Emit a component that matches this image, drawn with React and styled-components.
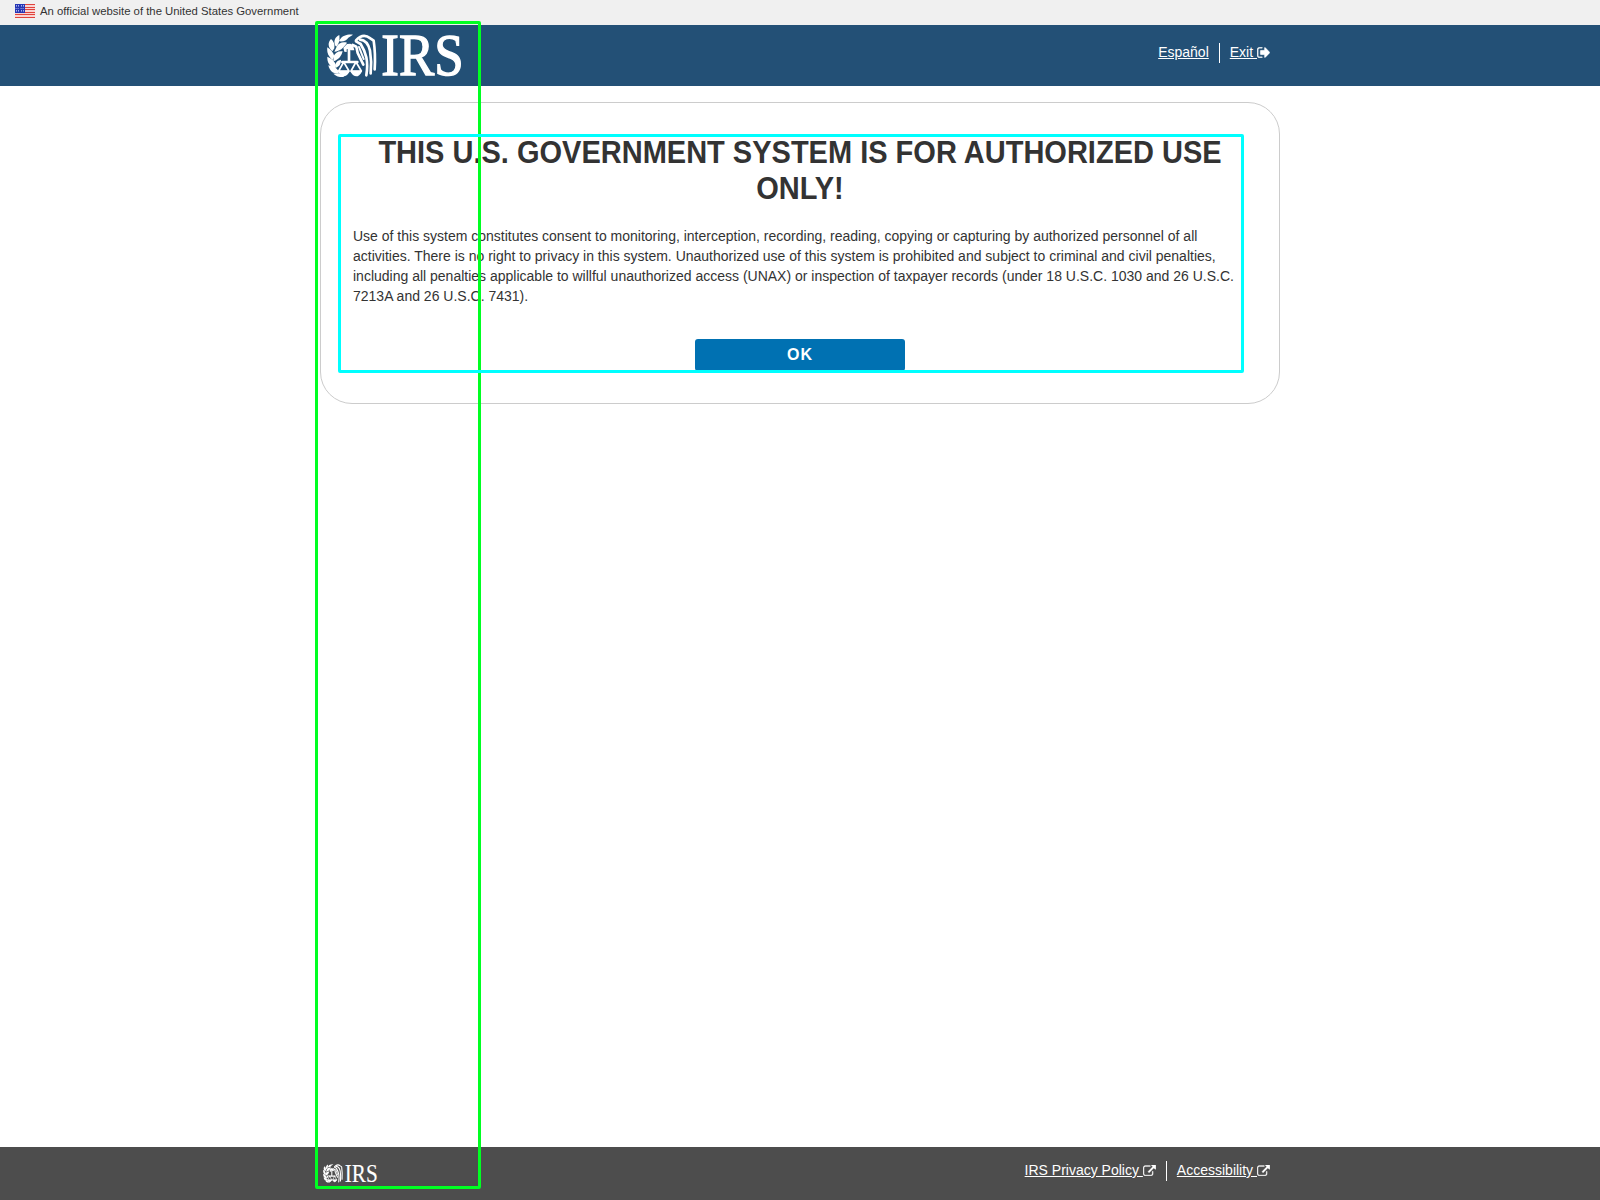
import React from 'react';
import styled, { createGlobalStyle } from 'styled-components';

const GlobalStyle = createGlobalStyle`
  *, *::before, *::after { box-sizing: border-box; }
  body {
    margin: 0;
    background: #fff;
    color: #333;
    font: 14px/20px "Liberation Sans", Arial, sans-serif;
  }
`;

const Page = styled.div`
  position: relative;
  display: flex;
  flex-direction: column;
  height: 1200px;
  overflow: hidden;
`;

const GovBanner = styled.div`
  display: flex;
  align-items: center;
  gap: 5px;
  height: 25px;
  padding: 0 15px 3px;
  background: #f0f0f0;
  font-size: 11.34px;
  line-height: 16px;
`;

const Bar = styled.div`
  flex: none;
  height: ${(p) => p.$height}px;
  background: ${(p) => p.$color};
  color: #fff;
`;

const Container = styled.div`
  display: flex;
  justify-content: space-between;
  align-items: flex-start;
  width: 960px;
  margin: 0 auto;
  padding: ${(p) => p.$top}px 10px 0 ${(p) => p.$left}px;
`;

const LinkList = styled.nav`
  display: flex;
  height: 20px;
  margin-top: ${(p) => p.$top}px;
`;

const BarLink = styled.a`
  display: block;
  color: #fff;
  line-height: 19px;
  text-decoration: underline;
  white-space: pre;

  & + & {
    margin-left: 10px;
    padding-left: 10px;
    border-left: 1px solid #fff;
  }
`;

const Icon = styled.svg`
  display: inline-block;
  width: 13px;
  height: 11px;
  vertical-align: -1px;
  fill: #fff;
  stroke: #fff;
  stroke-width: 40px;
`;

const Main = styled.main`
  flex: 1;
  padding-top: 16px;
`;

const Card = styled.section`
  display: flex;
  flex-direction: column;
  align-items: center;
  width: 960px;
  height: 302px;
  margin: 0 auto;
  padding: 32px 32px 30px;
  border: 1px solid #ccc;
  border-radius: 32px;
`;

const Title = styled.h1`
  height: 72px;
  margin: 0;
  font-size: 29px;
  line-height: 33.6px;
  font-weight: 700;
  text-align: center;
  transform: scaleY(1.0714);
  transform-origin: top;
`;

const Notice = styled.p`
  width: 894px;
  height: 80px;
  margin: 19px 0 33px;
  line-height: 18.69px;
  transform: scaleY(1.07);
  transform-origin: top;
`;

const OkButton = styled.button`
  width: 210px;
  height: 32px;
  padding: 0;
  border: 0;
  border-radius: 3px;
  background: #0071b2;
  color: #fff;
  font: 700 16px/32px "Liberation Sans", Arial, sans-serif;
  letter-spacing: 1px;
`;

const Highlight = styled.div`
  position: absolute;
  left: ${(p) => p.$x}px;
  top: ${(p) => p.$y}px;
  width: ${(p) => p.$w}px;
  height: ${(p) => p.$h}px;
  border: 3px solid ${(p) => p.$color};
  border-radius: 2px;
  pointer-events: none;
`;

const LogoSvg = styled.svg`
  display: block;
  width: ${(p) => p.$w}px;
  height: ${(p) => p.$h}px;
  margin-top: ${(p) => p.$top}px;
  overflow: visible;
`;

const Flag = () => (
  <svg width="20" height="14" viewBox="0 0 20 14">
    <rect width="20" height="14" fill="#f9d4d2" />
    {[0, 3, 5, 8, 10, 13].map((y) => (
      <rect key={y} y={y} width="20" height="1" fill="#e0433c" />
    ))}
    <rect width="10" height="9" fill="#2636b5" />
    {[1, 3, 6, 8].map((x) => (
      <g key={x} fill="#a9b1e8">
        <rect x={x} y="1" width="1" height="1.6" />
        <rect x={x - 0.4} y="4" width="1" height="1" />
        <rect x={x} y="6" width="1" height="1.6" />
      </g>
    ))}
  </svg>
);

const Logo = ({ w, h, top = 0, weight }) => (
  <LogoSvg $w={w} $h={h} $top={top} viewBox="0 0 405 132" preserveAspectRatio="none" role="img" aria-label="IRS">
    <g fill="#fff">
      {/* laurel branch */}
      <path d="M78 2C62 0 46 5 40 15L35 22C50 24 59 19 64 11Z" />
      <path d="M37 3C25 9 19 19 24 34L28 38C38 27 38 15 37 3Z" />
      <path d="M12 15C1 26 3 40 16 52L22 43C24 30 20 22 12 15Z" />
      <path d="M60 26C46 22 34 28 29 38L22 53C39 52 51 40 60 26Z" />
      <path d="M1 40C-1 56 4 68 17 78L22 67C19 55 11 46 1 40Z" />
      <path d="M47 52C33 50 24 57 20 66L19 82C34 78 43 67 47 52Z" />
      <path d="M1 68C0 86 9 98 25 104L27 93C22 81 14 73 1 68Z" />
      <path d="M42 77C28 80 24 87 25 101C36 99 42 90 42 77Z" />
      <path d="M4 94C8 111 18 120 36 119L33 109C26 100 17 96 4 94Z" />
      <path d="M19 119C28 128 40 130 52 129C44 119 34 117 19 119Z" />
      {/* head */}
      <path d="M60 30L49 41L52 53L59 54L59 46L66 44L71 49H82L78 34L70 29Z" />
    </g>
    <g fill="none" stroke="#fff" strokeLinecap="round" strokeLinejoin="round">
      {/* shoulder and feathers */}
      <path d="M87 19Q108 -4 130 13L140 20Q146 60 143 106" strokeWidth="8" />
      <path d="M99 17Q122 19 129 50Q135 85 131 118" strokeWidth="8" />
      <path d="M87 22L101 30Q113 49 118 70Q123 95 118 124" strokeWidth="8" />
      <path d="M77 33L88 38L92 57L109 92" strokeWidth="8" />
      <path d="M96 39L110 75" strokeWidth="6" />
      {/* balance */}
      <path d="M66 44V82M46 84H91" strokeWidth="8" />
      <path d="M50 84L35 111H66L50 84M87 84L72 111H103L87 84" strokeWidth="5" />
      <path d="M35 112Q50 138 66 112ZM72 112Q88 138 103 112Z" strokeWidth="4" fill="#fff" />
    </g>
    <text
      x="163"
      y="123"
      fill="#fff"
      stroke="#fff"
      strokeWidth={weight}
      fontFamily="Liberation Serif, Times New Roman, serif"
      fontSize="177"
      textLength="247"
      lengthAdjust="spacingAndGlyphs"
    >
      IRS
    </text>
  </LogoSvg>
);

const SignOut = () => (
  <Icon viewBox="-20 236 1608 1320" preserveAspectRatio="none" aria-hidden="true">
    <path d="M640 1440q0 4 1 20t.5 26.5-3 23.5-10 19.5-20.5 6.5h-320q-119 0-203.5-84.5t-84.5-203.5v-704q0-119 84.5-203.5t203.5-84.5h320q13 0 22.5 9.5t9.5 22.5q0 4 1 20t.5 26.5-3 23.5-10 19.5-20.5 6.5h-320q-66 0-113 47t-47 113v704q0 66 47 113t113 47h312l11.5 1 11.5 3 8 5.5 7 9 2 13.5zm928-544q0 26-19 45l-544 544q-19 19-45 19t-45-19-19-45v-288h-448q-26 0-45-19t-19-45v-384q0-26 19-45t45-19h448v-288q0-26 19-45t45-19 45 19l544 544q19 19 19 45z" />
  </Icon>
);

const ExternalLink = () => (
  <Icon viewBox="-20 44 1832 1512" preserveAspectRatio="none" aria-hidden="true">
    <path d="M1408 928v320q0 119-84.5 203.5t-203.5 84.5h-832q-119 0-203.5-84.5t-84.5-203.5v-832q0-119 84.5-203.5t203.5-84.5h704q14 0 23 9t9 23v64q0 14-9 23t-23 9h-704q-66 0-113 47t-47 113v832q0 66 47 113t113 47h832q66 0 113-47t47-113v-320q0-14 9-23t23-9h64q14 0 23 9t9 23zm384-864v512q0 26-19 45t-45 19-45-19l-176-176-652 652q-10 10-23 10t-23-10l-114-114q-10-10-10-23t10-23l652-652-176-176q-19-19-19-45t19-45 45-19h512q26 0 45 19t19 45z" />
  </Icon>
);

export default function App() {
  return (
    <Page>
      <GlobalStyle />
      <GovBanner>
        <Flag />
        <span>An official website of the United States Government</span>
      </GovBanner>
      <Bar as="header" $height={61} $color="#235076">
        <Container $top={9} $left={7}>
          <Logo w={135} h={44} weight={4} />
          <LinkList $top={9}>
            <BarLink>Español</BarLink>
            <BarLink>Exit <SignOut /></BarLink>
          </LinkList>
        </Container>
      </Bar>
      <Main>
        <Card>
          <Title>THIS U.S. GOVERNMENT SYSTEM IS FOR AUTHORIZED USE ONLY!</Title>
          <Notice>
            Use of this system constitutes consent to monitoring, interception, recording, reading, copying or capturing by authorized personnel of all activities. There is no right to privacy in this system. Unauthorized use of this system is prohibited and subject to criminal and civil penalties, including all penalties applicable to willful unauthorized access (UNAX) or inspection of taxpayer records (under 18 U.S.C. 1030 and 26 U.S.C. 7213A and 26 U.S.C. 7431).
          </Notice>
          <OkButton>OK</OkButton>
        </Card>
      </Main>
      <Bar as="footer" $height={53} $color="#4d4d4d">
        <Container $top={14} $left={3}>
          <Logo w={54} h={19} top={3} weight={1} />
          <LinkList $top={0}>
            <BarLink>IRS Privacy Policy <ExternalLink /></BarLink>
            <BarLink>Accessibility <ExternalLink /></BarLink>
          </LinkList>
        </Container>
      </Bar>
      <Highlight $x={315} $y={21} $w={166} $h={1168} $color="#00ff22" />
      <Highlight $x={338} $y={134} $w={906} $h={239} $color="#00ffff" />
    </Page>
  );
}
